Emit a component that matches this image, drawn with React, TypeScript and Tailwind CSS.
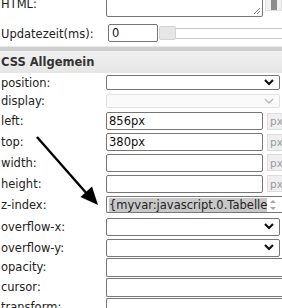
import React from 'react';

const font = { fontFamily: '"DejaVu Sans", Verdana, sans-serif' };

const Chevron: React.FC<{ light?: boolean }> = ({ light }) => (
    <svg width="10" height="7" viewBox="0 0 10 7" className="shrink-0">
        <polyline
            points="1,1 5,5 9,1"
            fill="none"
            stroke={light ? '#b5b5b5' : '#111'}
            strokeWidth={light ? 1.3 : 2.2}
        />
    </svg>
);

const Label: React.FC<{ text: string }> = ({ text }) => (
    <div className="w-[106px] shrink-0 pl-[1px] text-[#222]">{text}</div>
);

const Select: React.FC<{ h: string; disabled?: boolean }> = ({ h, disabled }) => (
    <div
        className={`${h} w-[174px] flex items-center justify-end pr-[5px] rounded-[2px] border ${
            disabled ? 'border-[#e2e2e2] bg-[#fafafa]' : 'border-[#767676] bg-white'
        }`}
    >
        <Chevron light={disabled} />
    </div>
);

const PxInput: React.FC<{ value?: string }> = ({ value }) => (
    <div className="flex items-center gap-[4px]">
        <div className="h-[18px] w-[157px] flex items-center px-[2px] rounded-[2px] border border-[#767676] bg-white text-[#111]">
            {value}
        </div>
        <div className="h-[17px] w-[20px] flex items-center pl-[2px] border border-[#dcdcdc] bg-[#efefef] text-[10.5px] text-[#9a9a9a]">
            px
        </div>
    </div>
);

const WideInput: React.FC = () => (
    <div className="h-[19px] w-[190px] rounded-l-[2px] border border-r-0 border-[#767676] bg-white" />
);

const Row: React.FC<{ h: string; label: string; children: React.ReactNode }> = ({ h, label, children }) => (
    <div className={`${h} flex items-center`}>
        <Label text={label} />
        {children}
    </div>
);

export default function App() {
    return (
        <div className="relative w-[282px] h-[308px] overflow-hidden bg-white text-[11.5px] leading-[14px]" style={font}>
            {/* HTML */}
            <div className="flex mt-[-23px] h-[40px]">
                <div className="w-[106px] pl-[1px] pt-[20px] text-[#222]">HTML:</div>
                <div className="relative w-[157px] h-[40px] rounded-[2px] border border-[#767676] bg-white">
                    <svg width="8" height="8" className="absolute right-[1px] bottom-[1px]">
                        <line x1="1" y1="7" x2="7" y2="1" stroke="#888" strokeWidth="1" />
                        <line x1="4" y1="7" x2="7" y2="4" stroke="#888" strokeWidth="1" />
                    </svg>
                </div>
                <div className="ml-[2px] w-[17px] h-[34px] flex justify-center border border-[#e0e0e0] bg-[#f1f1f1]">
                    <div className="mt-[22px] w-[6px] h-[10px] bg-[#8c8c8c]" />
                </div>
            </div>

            {/* Updatezeit */}
            <div className="flex items-center mt-[7px] h-[18px]">
                <div className="w-[108px] pl-[1px] pt-[1px] text-[#222]">Updatezeit(ms):</div>
                <div className="h-[18px] w-[50px] flex items-center px-[3px] rounded-[2px] border border-[#767676] bg-white text-[#111]">
                    0
                </div>
                <div className="relative ml-[1px] flex-1 h-[18px]">
                    <div className="absolute left-[10px] right-[-10px] top-[4px] h-[11px] border border-[#c5c5c5] bg-white" />
                    <div className="absolute left-0 top-[2px] w-[17px] h-[14px] rounded-[2px] border border-[#d3d3d3] bg-[#e6e6e6]" />
                </div>
            </div>

            {/* Section header */}
            <div className="mt-[4px] h-[1px] bg-[#e8e8e8]" />
            <div className="h-[4px] bg-[#cfcfcf]" />
            <div className="h-[22px] flex items-center pl-[1px] bg-gradient-to-b from-[#f0f0f0] to-[#e6e6e6] font-bold text-[#333]">
                CSS Allgemein
            </div>

            <Row h="h-[19px]" label="position:">
                <Select h="h-[15px]" />
            </Row>
            <Row h="h-[18px]" label="display:">
                <Select h="h-[14px]" disabled />
            </Row>
            <Row h="h-[22px]" label="left:">
                <PxInput value="856px" />
            </Row>
            <Row h="h-[20px]" label="top:">
                <PxInput value="380px" />
            </Row>
            <Row h="h-[21px]" label="width:">
                <PxInput />
            </Row>
            <Row h="h-[21px]" label="height:">
                <PxInput />
            </Row>
            <Row h="h-[21px]" label="z-index:">
                <div className="h-[17px] w-[180px] flex items-center pl-[2px] rounded-l-[2px] border border-r-0 border-[#767676] bg-white overflow-hidden">
                    <span className="bg-[#c8c8c8] text-[#222] whitespace-nowrap">{'{myvar:javascript.0.Tabelle'}</span>
                    <svg width="10" height="14" className="shrink-0 ml-[1px]" viewBox="0 0 10 14">
                        <polygon points="2,5 5,2 8,5" fill="#a8a8a8" />
                        <polygon points="2,9 5,12 8,9" fill="#a8a8a8" />
                    </svg>
                </div>
            </Row>
            <Row h="h-[23px]" label="overflow-x:">
                <Select h="h-[18px]" />
            </Row>
            <Row h="h-[19px]" label="overflow-y:">
                <Select h="h-[18px]" />
            </Row>
            <Row h="h-[20px]" label="opacity:">
                <WideInput />
            </Row>
            <Row h="h-[20px]" label="cursor:">
                <WideInput />
            </Row>
            <Row h="h-[20px]" label="transform:">
                <WideInput />
            </Row>

            {/* annotation arrow */}
            <svg className="absolute left-0 top-0 pointer-events-none" width="282" height="308">
                <line x1="37" y1="137" x2="88" y2="195" stroke="#000" strokeWidth="2.4" />
                <polygon points="98,205 80.5,197 92,186.5" fill="#000" />
            </svg>
        </div>
    );
}
